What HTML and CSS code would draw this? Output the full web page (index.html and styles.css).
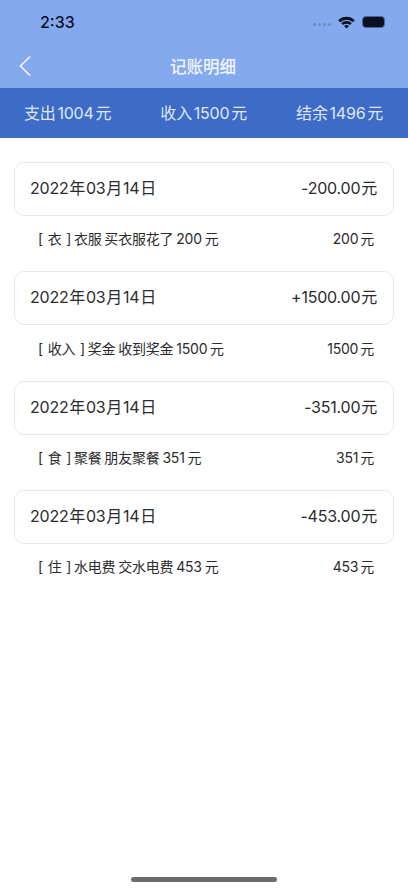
FILE: index.html
```html
<!DOCTYPE html>
<html lang="zh-CN">
<head>
    <meta charset="UTF-8">
    <meta name="viewport" content="width=device-width, initial-scale=1.0">
    <title>记账明细</title>
    <link rel="stylesheet" href="styles.css">
</head>
<body>
    <div class="top">
        <div class="status-bar">
            <span class="time">2:33</span>
            <div class="status-icons">
                <span class="signal"><i></i><i></i><i></i><i></i></span>
                <svg class="wifi" width="17" height="13" viewBox="0 0 17 13">
                    <path d="M0.2 4.2 A11.8 11.8 0 0 1 16.8 4.2 L14.8 6.3 A9 9 0 0 0 2.2 6.3 Z" fill="#0b1023"/>
                    <path d="M3.2 7.2 A7.4 7.4 0 0 1 13.8 7.2 L11.9 9.1 A4.8 4.8 0 0 0 5.1 9.1 Z" fill="#0b1023"/>
                    <path d="M6 10 A3.4 3.4 0 0 1 11 10 L8.5 12.6 Z" fill="#0b1023"/>
                </svg>
                <span class="battery"><b></b></span>
            </div>
        </div>
        <div class="nav-bar">
            <svg class="back" width="14" height="22" viewBox="0 0 14 22">
                <path d="M12 1.5 L2.5 11 L12 20.5" fill="none" stroke="#f2f6ff" stroke-width="1.7"/>
            </svg>
            <span class="nav-title">记账明细</span>
        </div>
    </div>

    <div class="summary">
        <span>支出 1004 元</span>
        <span>收入 1500 元</span>
        <span>结余 1496 元</span>
    </div>

    <div class="list">
        <div class="day-card">
            <span>2022 年 03 月 14 日</span>
            <span>-200.00 元</span>
        </div>
        <div class="record">
            <span class="record-note"><span class="tag">[ 衣 ]</span> 衣服 买衣服花了 200 元</span>
            <span>200 元</span>
        </div>

        <div class="day-card">
            <span>2022 年 03 月 14 日</span>
            <span>+1500.00 元</span>
        </div>
        <div class="record">
            <span class="record-note"><span class="tag">[ 收入 ]</span> 奖金 收到奖金 1500 元</span>
            <span>1500 元</span>
        </div>

        <div class="day-card">
            <span>2022 年 03 月 14 日</span>
            <span>-351.00 元</span>
        </div>
        <div class="record">
            <span class="record-note"><span class="tag">[ 食 ]</span> 聚餐 朋友聚餐 351 元</span>
            <span>351 元</span>
        </div>

        <div class="day-card">
            <span>2022 年 03 月 14 日</span>
            <span>-453.00 元</span>
        </div>
        <div class="record">
            <span class="record-note"><span class="tag">[ 住 ]</span> 水电费 交水电费 453 元</span>
            <span>453 元</span>
        </div>
    </div>

    <div class="home-bar"></div>
</body>
</html>
```

FILE: styles.css
```css
* {
    box-sizing: border-box;
}
body {
    margin: 0;
    height: 890px;
    overflow: hidden;
    position: relative;
    background-color: white;
    font-family: Inter, "Noto Sans CJK SC", sans-serif;
    color: #2b2b2d;
}
.top {
    height: 88px;
    background-color: #85a9ef;
}
.status-bar {
    height: 44px;
    padding: 0 23px 0 40px;
    display: flex;
    justify-content: space-between;
    align-items: center;
}
.time {
    font-size: 16px;
    font-weight: 500;
    color: #0b1023;
}
.status-icons {
    display: flex;
    align-items: center;
}
.signal {
    display: flex;
    gap: 2px;
    margin-right: 7px;
    margin-top: 5px;
}
.signal i {
    width: 3px;
    height: 3px;
    border-radius: 50%;
    background-color: #7188bd;
}
.battery {
    width: 23px;
    height: 12px;
    margin-left: 7px;
    padding: 1px;
    border: 1px solid #4e6496;
    border-radius: 4px;
    background-color: #0b1023;
}
.battery b {
    display: block;
    height: 100%;
    border-radius: 2px;
    background-color: #0b1023;
}
.nav-bar {
    height: 44px;
    padding-left: 18px;
    display: flex;
    align-items: center;
    position: relative;
}
.nav-title {
    position: absolute;
    left: 0;
    right: 2px;
    text-align: center;
    font-size: 16.5px;
    font-weight: 500;
    color: #f2f6ff;
}
.summary {
    height: 50px;
    padding: 0 25px 2px 24px;
    display: flex;
    justify-content: space-between;
    align-items: center;
    background-color: #3d6bc5;
    color: #dfe8fa;
    font-size: 16px;
    letter-spacing: -0.2px;
    word-spacing: -2.5px;
}
.list {
    padding: 24px 14px 0;
}
.day-card {
    height: 54px;
    padding: 0 16px 4px 15px;
    display: flex;
    justify-content: space-between;
    align-items: center;
    border: 1px solid #e8e8ec;
    border-radius: 10px;
    font-size: 16px;
    letter-spacing: -0.2px;
    word-spacing: -3.5px;
}
.record {
    height: 55.4px;
    padding: 0 20px 11px 24px;
    display: flex;
    justify-content: space-between;
    align-items: center;
    font-size: 14px;
    letter-spacing: -0.2px;
    word-spacing: -1.8px;
}
.record-note {
    word-spacing: -0.9px;
}
.tag {
    word-spacing: 1px;
}
.home-bar {
    position: absolute;
    left: 131px;
    bottom: 8px;
    width: 146px;
    height: 5px;
    border-radius: 3px;
    background-color: #6b6b6e;
}
```
